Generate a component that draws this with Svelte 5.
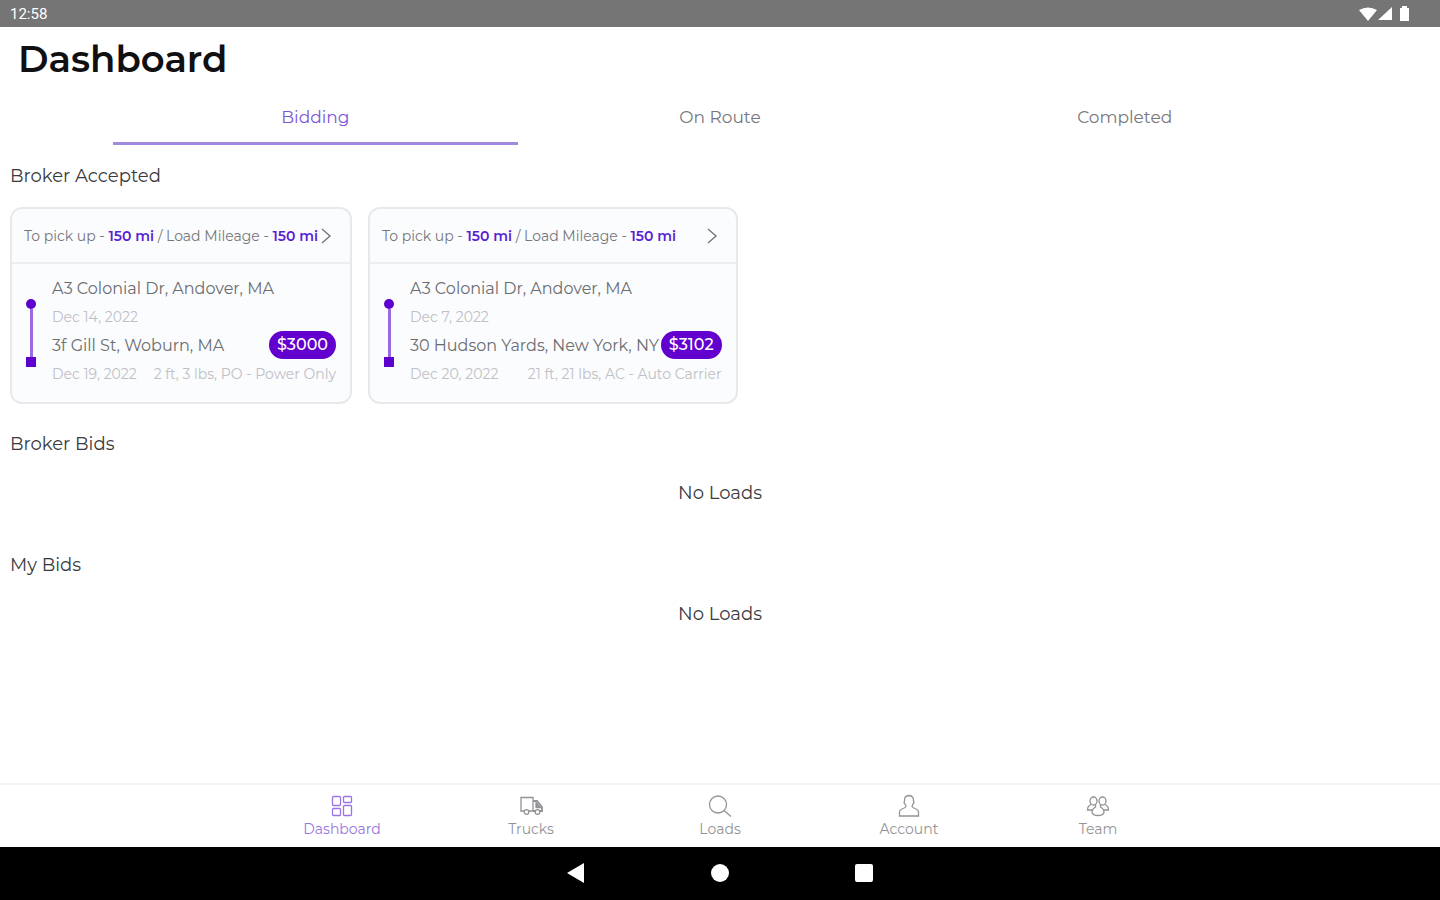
<script lang="ts">
	interface Load {
		id: number;
		toPickup: string;
		mileage: string;
		origin: string;
		pickupDate: string;
		destination: string;
		deliveryDate: string;
		price: string;
		details: string;
	}

	const tabs = ['Bidding', 'On Route', 'Completed'];
	const navItems = ['Dashboard', 'Trucks', 'Loads', 'Account', 'Team'];

	let activeTab = $state('Bidding');
	let activeNav = $state('Dashboard');

	const accepted: Load[] = [
		{
			id: 1,
			toPickup: '150 mi',
			mileage: '150 mi',
			origin: 'A3 Colonial Dr, Andover, MA',
			pickupDate: 'Dec 14, 2022',
			destination: '3f Gill St, Woburn, MA',
			deliveryDate: 'Dec 19, 2022',
			price: '$3000',
			details: '2 ft, 3 lbs, PO - Power Only'
		},
		{
			id: 2,
			toPickup: '150 mi',
			mileage: '150 mi',
			origin: 'A3 Colonial Dr, Andover, MA',
			pickupDate: 'Dec 7, 2022',
			destination: '30 Hudson Yards, New York, NY',
			deliveryDate: 'Dec 20, 2022',
			price: '$3102',
			details: '21 ft, 21 lbs, AC - Auto Carrier'
		}
	];

	const sections: { title: string; loads: Load[] }[] = [
		{ title: 'Broker Accepted', loads: accepted },
		{ title: 'Broker Bids', loads: [] },
		{ title: 'My Bids', loads: [] }
	];
</script>

<div class="app">
	<div class="status-bar">
		<span>12:58</span>
		<svg width="54" height="16" viewBox="0 0 54 16" fill="currentColor" aria-hidden="true">
			<path d="M1 4Q10-1 19 4L10 15z" />
			<path d="M34 1v13H20z" />
			<path d="M42 2h2V0h5v2h2v13h-9z" />
		</svg>
	</div>

	<header>
		<h1>Dashboard</h1>
	</header>

	<div class="tabs" role="tablist">
		{#each tabs as tab}
			<button
				role="tab"
				class:active={activeTab === tab}
				aria-selected={activeTab === tab}
				onclick={() => (activeTab = tab)}
			>
				{tab}
			</button>
		{/each}
	</div>

	<main>
		{#each sections as section}
			<section>
				<h2>{section.title}</h2>
				{#if section.loads.length}
					<div class="cards">
						{#each section.loads as load (load.id)}
							<article class="card">
								<button class="card-head">
									<span>
										To pick up - <b>{load.toPickup}</b> / Load Mileage - <b>{load.mileage}</b>
									</span>
									<svg width="12" height="16" viewBox="0 0 12 16" aria-hidden="true">
										<path d="M2 1l8 7-8 7" fill="none" stroke="currentColor" stroke-width="1.4" />
									</svg>
								</button>
								<div class="card-body">
									<div class="route">
										<i class="dot"></i>
										<i class="line"></i>
										<i class="stop"></i>
									</div>
									<div class="stops">
										<div class="place">{load.origin}</div>
										<div class="meta">{load.pickupDate}</div>
										<div class="place">
											<span>{load.destination}</span>
											<span class="price">{load.price}</span>
										</div>
										<div class="meta">
											<span>{load.deliveryDate}</span>
											<span>{load.details}</span>
										</div>
									</div>
								</div>
							</article>
						{/each}
					</div>
				{:else}
					<p class="empty">No Loads</p>
				{/if}
			</section>
		{/each}
	</main>

	<nav class="bottom-nav">
		{#each navItems as item}
			<button class:active={activeNav === item} onclick={() => (activeNav = item)}>
				<svg width="24" height="24" viewBox="0 0 24 24" aria-hidden="true">
					{#if item === 'Dashboard'}
						<rect x="2.500" y="2.500" width="8" height="9" rx="1" />
						<rect x="13.500" y="2.500" width="8" height="6" rx="1" />
						<rect x="2.500" y="14.500" width="8" height="7" rx="1" />
						<rect x="13.500" y="11.500" width="8" height="10" rx="1" />
					{:else if item === 'Trucks'}
						<path d="M5 17H2V3.500h12V17H10" />
						<path d="M14 7h4l5 6v4h-2M14 17h2" stroke-width="1.800" />
						<path d="M17 8.500v5h4.500z" fill="currentColor" />
						<circle cx="7.500" cy="18" r="2.300" />
						<circle cx="18.500" cy="18" r="2.300" />
					{:else if item === 'Loads'}
						<circle cx="10" cy="10.500" r="8.500" />
						<path d="M16 16.500l7 6" />
					{:else if item === 'Account'}
						<path d="M9 12.500Q8.500 11 8 10Q6.500 9 7.500 7Q7 2 12 1.500Q17 2 16.500 7Q17.500 9 16 10Q15.500 11 15 12.500Q16 14 19 15Q21.500 16 21.500 18V22H2.500V18Q2.500 16 5 15Q8 14 9 12.500z" />
					{:else}
						<ellipse cx="7.500" cy="7" rx="3.500" ry="4" />
						<ellipse cx="16.500" cy="7" rx="3.500" ry="4" />
						<path d="M5 10.500Q1.500 12 1.500 16H6M19 10.500Q22.500 12 22.500 16H18" />
						<path d="M9.500 10.500V13Q6 15 6 18.500Q7 21.500 12 21.500T18 18.500Q18 15 14.500 13V10.500" />
					{/if}
				</svg>
				<span>{item}</span>
			</button>
		{/each}
	</nav>

	<div class="system-nav">
		<button aria-label="Back">
			<svg width="20" height="20" viewBox="0 0 20 20" fill="currentColor">
				<path d="M1 10L18 0v20z" />
			</svg>
		</button>
		<button aria-label="Home">
			<svg width="20" height="20" viewBox="0 0 20 20" fill="currentColor">
				<circle cx="10" cy="10" r="9" />
			</svg>
		</button>
		<button aria-label="Overview">
			<svg width="20" height="20" viewBox="0 0 20 20" fill="currentColor">
				<rect x="1" y="1" width="18" height="18" rx="2" />
			</svg>
		</button>
	</div>
</div>

<style>
	:global(body) {
		margin: 0;
	}

	.app {
		min-height: 100vh;
		display: flex;
		flex-direction: column;
		background: #fff;
		color: #3a3a3e;
		font-family: Montserrat, Inter, sans-serif;
	}

	button {
		border: none;
		background: none;
		padding: 0;
		font: inherit;
		color: inherit;
		cursor: pointer;
	}

	.status-bar {
		display: flex;
		align-items: center;
		justify-content: space-between;
		height: 27px;
		padding: 0 28px 0 10px;
		background: #757575;
		color: #fff;
		font-family: Roboto, sans-serif;
		font-size: 15px;
		font-weight: 400;
	}

	header {
		padding: 8px 18px;
	}

	h1 {
		margin: 0;
		color: #101012;
		font-size: 37px;
		line-height: 48px;
		font-weight: 600;
	}

	.tabs {
		display: flex;
		padding: 0 113px;
	}
	.tabs button {
		flex: 1;
		height: 54px;
		border-bottom: 3px solid transparent;
		color: #77777b;
		font-size: 17px;
	}
	.tabs button.active {
		color: #7d55d8;
		border-color: #a08add;
	}

	main {
		flex: 1;
		padding: 19px 10px 0;
	}

	h2 {
		margin: 0;
		font-size: 18px;
		line-height: 24px;
		font-weight: 400;
	}

	.cards {
		display: flex;
		gap: 16px;
		padding: 19px 0 28px;
	}

	.card {
		min-width: 340px;
		border: 2px solid #e8e9ec;
		border-radius: 12px;
		box-sizing: border-box;
		background: #fafcfe;
		white-space: nowrap;
	}

	.card-head {
		display: flex;
		align-items: center;
		justify-content: space-between;
		gap: 2px;
		width: 100%;
		height: 55px;
		padding: 0 18px 0 12px;
		border-bottom: 2px solid #eceef1;
		color: #77777b;
		font-size: 14px;
	}
	.card-head b {
		color: #5a1fd0;
		font-weight: 600;
	}

	.card-body {
		display: flex;
		gap: 16px;
		padding: 10px 14px 14px;
	}

	.route {
		display: flex;
		flex-direction: column;
		align-items: center;
		padding: 25px 0 21px;
	}
	.dot,
	.stop {
		width: 10px;
		height: 10px;
		background: #5e00ce;
	}
	.dot {
		border-radius: 50%;
	}
	.line {
		flex: 1;
		width: 3px;
		background: #9a6ade;
	}

	.stops {
		flex: 1;
	}
	.place,
	.meta {
		display: flex;
		align-items: center;
		justify-content: space-between;
		gap: 2px;
	}
	.place {
		height: 28px;
		color: #6c6c70;
		font-size: 16px;
	}
	.meta {
		height: 29px;
		color: #bfc0c5;
		font-size: 14px;
	}

	.price {
		padding: 0 8px;
		border-radius: 14px;
		background: #6200ce;
		color: #fff;
		font-size: 16px;
		line-height: 28px;
		font-weight: 500;
	}

	.empty {
		margin: 0;
		padding: 25px 0 48px;
		font-size: 18px;
		line-height: 24px;
		text-align: center;
	}

	.bottom-nav {
		display: flex;
		justify-content: center;
		border-top: 2px solid #f4f4f5;
	}
	.bottom-nav button {
		display: flex;
		flex-direction: column;
		align-items: center;
		gap: 2px;
		width: 189px;
		padding: 9px 0;
		color: #939397;
		font-size: 14px;
		line-height: 18px;
	}
	.bottom-nav button.active {
		color: #9b74e4;
	}
	.bottom-nav svg {
		fill: none;
		stroke: currentColor;
		stroke-width: 1.3;
	}

	.system-nav {
		display: flex;
		justify-content: center;
		gap: 124px;
		padding: 16px 0 17px;
		background: #000;
		color: #fff;
	}
	.system-nav button {
		display: flex;
	}
</style>
